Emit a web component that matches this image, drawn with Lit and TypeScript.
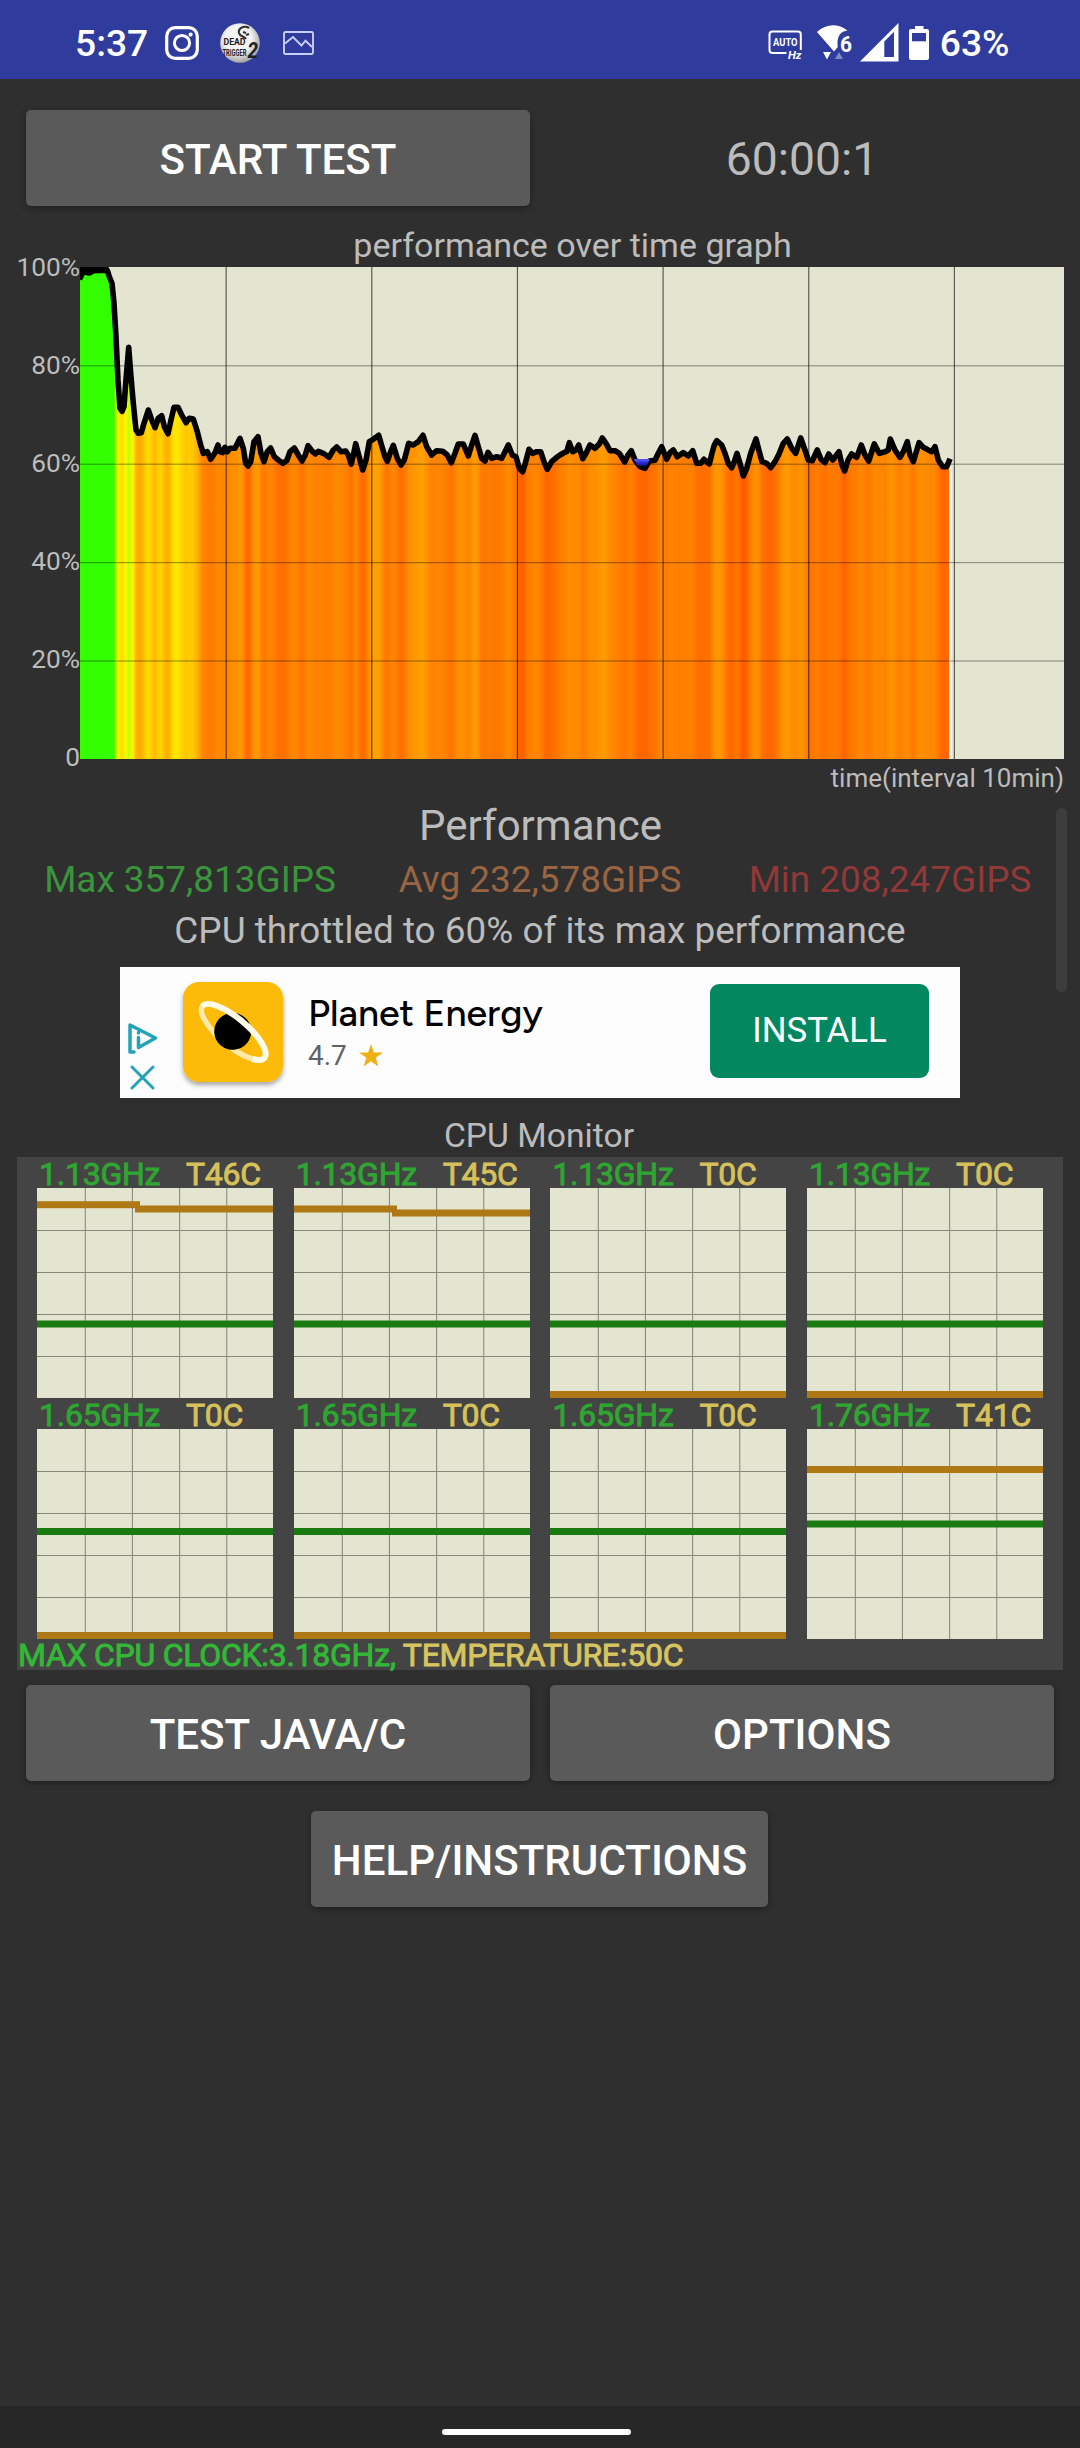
import { LitElement, html, svg, css } from "lit";
import { customElement, property } from "lit/decorators.js";

/* Trace samples, grouped by the stretch of the run they were taken in. */
const early: number[][] = [
  [242,110],[250,95],[268,99],[280,92],[322,91],[328,110],[336,130],[342,190],[348,290],[354,420],[360,505],[366,514],[372,500],[377,430],
  [386,322],[392,400],[400,490],[408,570],[415,580],[424,578],[432,550],[445,510],[455,540],[465,563],[475,535],[485,527],[493,560],
  [504,581],[513,540],[522,502],[534,502],[545,525],[558,548],[568,535],[580,537],[592,575],
];
const middle: number[][] = [
  [62,135],[70,160],[82,155],[92,178],[105,158],[114,135],[120,155],[128,158],[135,142],[142,155],[150,145],[165,145],[180,115],[190,145],[197,190],[204,198],
  [212,185],[222,125],[234,110],[243,160],[252,185],[262,155],[272,144],[283,170],[295,180],[308,190],[320,182],[330,155],[343,144],
  [355,165],[366,183],[376,165],[384,137],[398,155],[406,162],[415,154],[430,160],[447,172],[460,150],[470,141],[483,155],[497,153],[505,165],
  [514,192],[521,160],[527,131],[536,165],[548,210],[558,180],[568,125],[580,118],[596,106],[606,140],[615,170],[622,184],[630,160],
  [640,136],[652,175],[663,195],[673,180],[686,130],[700,135],[715,125],[729,106],[740,140],[755,165],[770,152],[788,154],[802,165],
  [814,188],[825,160],[835,132],[850,132],[865,168],[875,135],[885,106],[895,140],[905,175],[915,183],[924,157],[935,175],[950,170],
  [965,175],[975,155],[985,135],[997,165],[1008,170],[1018,205],[1028,215],[1036,190],[1047,148],[1058,160],[1070,155],[1082,155],
  [1092,185],[1102,208],[1115,185],[1130,172],
];
const late: number[][] = [
  [0,165],[12,158],[20,155],[28,128],[38,155],[48,150],[56,135],[68,176],[78,160],[90,135],[105,145],[118,132],[127,114],[138,130],
  [150,152],[165,152],[178,160],[194,186],[204,165],[214,152],[225,180],[240,200],[255,205],[268,183],[285,181],[295,160],[305,140],
  [320,178],[330,158],[340,150],[352,170],[370,158],[385,168],[398,152],[410,190],[422,190],[432,178],[448,192],[456,160],[463,135],
  [470,122],[485,135],[495,160],[505,190],[515,203],[523,185],[531,160],[540,190],[550,228],[560,205],[572,160],[588,117],[598,155],
  [606,185],[620,190],[632,203],[645,185],[657,162],[670,130],[682,117],[695,145],[707,160],[722,114],[735,150],[745,180],[757,182],
  [772,150],[783,178],[795,188],[806,162],[818,180],[837,155],[846,195],[854,213],[864,180],[875,162],[890,172],[904,135],[915,165],
  [926,183],[943,132],[958,160],[975,155],[985,150],[991,117],[1005,150],[1020,172],[1030,155],[1042,125],[1050,165],[1060,185],
  [1077,128],[1090,142],[1105,150],[1115,155],[1125,140],[1135,180],[1148,200],[1160,200],[1167,184],
];
const place = (points: number[][], left: number, top: number) =>
  points.map(([x, y]) => [x / 3 + left - 80, y / 3 + top - 267]);
const trace = [...place(early, 0, 240), ...place(middle, 180, 400), ...place(late, 560, 400)];
const lineEnd = trace[trace.length - 1][0];

/* The fill colour follows a lightly smoothed trace once the first drop is over. */
const smooth = trace.map(([x, y], i) => {
  if (i < 34 || i > trace.length - 2) return [x, y];
  return [x, (trace[i - 1][1] + 3 * y + trace[i + 1][1]) / 5];
});
const heat = (y: number) => {
  const v = 100 - y / 4.92;
  if (v >= 87) return "rgb(51,255,0)";
  if (v >= 74) return `rgb(${Math.round(255 - (v - 74) * 6)},255,0)`;
  return `rgb(255,${Math.round(89 + (v - 58.4) * 10.7)},0)`;
};

@customElement("throttle-graph")
class ThrottleGraph extends LitElement {
  static styles = css`
    :host { display: grid; grid-template-columns: 80px 984px; color: #bcbcbc; }
    .axis { display: flex; flex-direction: column; justify-content: space-between; height: 490px; font-size: 26.3px; text-align: right; }
    .tick { height: 0; line-height: 0; }
    .plot { display: block; }
    .note { grid-column: 2; height: 38px; line-height: 38px; font-size: 26px; text-align: right; }
  `;
  render() {
    const line = trace.map((p) => p.map((n) => n.toFixed(1)).join(",")).join(" ");
    return html`
      <div class="axis">${["100%", "80%", "60%", "40%", "20%", "0"].map((t) => html`<div class="tick">${t}</div>`)}</div>
      <svg class="plot" width="984" height="492" viewBox="0 0 984 492">
        <defs>
          <linearGradient id="heat" gradientUnits="userSpaceOnUse" x1="0" y1="0" x2=${lineEnd} y2="0">
            ${smooth.map(([x, y]) => svg`<stop offset=${(x / lineEnd).toFixed(4)} stop-color=${heat(y)} />`)}
          </linearGradient>
        </defs>
        <rect width="984" height="492" fill="#e4e5d0" />
        <rect x="870" y="200" width="2" height="292" fill="#f4f1e6" />
        <polygon points="0,492 0,14 ${line} ${lineEnd},492" fill="url(#heat)" />
        <polyline points=${line} fill="none" stroke="#000" stroke-width="5.6" stroke-linejoin="round" stroke-linecap="square" />
        <rect x="0" y="0" width="28.5" height="5" fill="#000" />
        <polygon points="554,192 569.5,192 567,198.5 557.5,198.5" fill="#2a2ad8" />
        <polygon points="554,192 569.5,192 568.7,194.5 555,194.5" fill="#5050f0" />
        ${[1, 2, 3, 4].map((i) => svg`<rect x="0" y=${i * 98.4 - 0.2} width="984" height="1.2" fill="#000" fill-opacity=".36" />`)}
        ${[1, 2, 3, 4, 5, 6].map((i) => svg`<rect x=${i * 145.65 - 0.1} y="0" width="1.2" height="492" fill="#000" fill-opacity=".6" />`)}
      </svg>
      <div class="note">time(interval 10min)</div>
    `;
  }
}

@customElement("core-chart")
class CoreChart extends LitElement {
  @property() clock = "";
  @property() temp = "";
  /* Vertical centres of the two traces; heat may step down part-way across. */
  @property({ type: Number }) clockY = 0;
  @property({ type: Array }) heatY: number[] = [];

  static styles = css`
    :host { display: block; width: 236px; }
    .head { display: grid; grid-template-columns: 147px 1fr; height: 31px; line-height: 34px; padding-left: 2px; box-sizing: border-box; font-size: 32px; letter-spacing: -0.25px; white-space: nowrap; }
    .clock { color: #2fa632; -webkit-text-stroke: 0.9px #2fa632; }
    .temp { color: #d6c15b; -webkit-text-stroke: 0.9px #d6c15b; }
    .plot { display: block; }
  `;
  render() {
    const [a, b] = this.heatY;
    return html`
      <div class="head"><span class="clock">${this.clock}</span><span class="temp">${this.temp}</span></div>
      <svg class="plot" width="236" height="210" viewBox="0 0 236 210">
        <rect width="236" height="210" fill="#e4e5d0" />
        ${[1, 2, 3, 4].map((i) => svg`
          <rect x="0" y=${i * 42} width="236" height="1" fill="#85877b" />
          <rect x=${(i * 47.15 + 0.6).toFixed(2)} y="0" width="1.1" height="210" fill="#8b8d81" />`)}
        <rect x="0" y=${this.clockY - 3.5} width="236" height="7" fill="#187a10" />
        ${b === undefined
          ? svg`<rect x="0" y=${a - 3.5} width="236" height="7" fill="#ae7914" />`
          : svg`<rect x="0" y=${a - 3.5} width="103" height="7" fill="#ae7914" /><rect x="98" y=${b - 3.5} width="138" height="7" fill="#ae7914" />`}
      </svg>
    `;
  }
}

@customElement("app-root")
class AppRoot extends LitElement {
  static styles = css`
    :host { display: flex; flex-direction: column; width: 1080px; height: 2448px; background: #2f2f2f; color: #bcbcbc; font-family: Roboto, "Liberation Sans", sans-serif; overflow: hidden; }
    svg { display: block; flex: none; overflow: visible; }
    .status { display: flex; align-items: center; height: 79px; padding: 6px 70.5px 0 75px; background: #2f3c9d; color: #fff; font-size: 37.2px; font-weight: 500; box-sizing: border-box; flex: none; }
    .status span { padding-top: 1.5px; }
    .status .push { margin-left: auto; }
    .time { width: 90px; }
    .ball { margin-left: 21px; }
    .photo { margin-left: 22.5px; }
    .wifi { margin-left: 14px; }
    .signal { margin-left: 7px; }
    .battery { margin-left: 10px; }
    .charge { margin-left: 11px; }
    .top { display: grid; grid-template-columns: 504px 504px; column-gap: 20px; padding: 31px 26px 0; height: 113px; flex: none; }
    .btn { display: flex; align-items: center; justify-content: center; height: 96px; padding-top: 2px; box-sizing: border-box; border-radius: 5px; background: #5a5a5b; color: #fff; font-size: 42.1px; font-weight: 500; box-shadow: 0 2px 6px rgba(0,0,0,.35); }
    .timer { text-align: center; line-height: 99px; font-size: 46.3px; }
    .title { height: 44px; line-height: 44px; font-size: 34px; text-align: center; padding-left: 65px; }
    .results { position: relative; }
    .thumb { position: absolute; right: 13px; top: 11px; width: 11px; height: 184px; border-radius: 6px; background: #3d3d3e; }
    .heading { height: 57px; line-height: 57px; font-size: 42px; text-align: center; padding-left: 1px; }
    .stats { display: grid; grid-template-columns: repeat(3, 350px); justify-content: center; height: 51px; line-height: 51px; font-size: 36.9px; text-align: center; }
    .max { color: #3a943c; } .avg { color: #996441; } .min { color: #913838; }
    .verdict { height: 62px; line-height: 51px; font-size: 36.9px; text-align: center; }
    .ad { display: flex; align-items: center; width: 840px; height: 131px; padding-bottom: 2px; box-sizing: border-box; margin: 0 auto; background: #fdfdfd; }
    .app { border-radius: 16px; box-shadow: 0 3px 5px rgba(0,0,0,.35); overflow: hidden; }
    .info { margin-left: 25px; width: 402px; padding-top: 3px; }
    .name { color: #000; font-family: Figtree, "Open Sans", Inter, sans-serif; font-size: 37.6px; line-height: 42px; font-weight: 500; white-space: nowrap; }
    .rating { display: flex; align-items: center; gap: 12px; padding-top: 3px; color: #5f6368; font-size: 28px; line-height: 38px; }
    .install { width: 219px; height: 94px; line-height: 92px; border-radius: 9px; background: #03875f; color: #fff; font-size: 34.8px; text-align: center; margin-bottom: 1px; }
    .cpu { height: 59px; line-height: 75px; font-size: 33.7px; text-align: center; padding-right: 2px; }
    .panel { width: 1046px; height: 513px; margin: 0 auto; background: #444; }
    .cores { display: grid; grid-template-columns: repeat(4, 236px); column-gap: 20.7px; padding-left: 20px; }
    .peak { height: 31px; line-height: 33px; font-size: 32px; letter-spacing: -0.27px; padding-left: 1px; color: #33b737; -webkit-text-stroke: 0.9px #33b737; white-space: pre; }
    .peak b { font-weight: 400; color: #d6c560; -webkit-text-stroke: 0.9px #d6c560; }
    .actions { display: grid; grid-template-columns: 504px 504px; gap: 30px 20px; padding: 15px 26px; }
    .help { grid-column: 1 / 3; justify-self: center; width: 457px; margin-right: 1px; }
    .nav { margin-top: auto; height: 42px; background: #272727; display: flex; justify-content: center; align-items: center; padding: 9px 7px 0 0; box-sizing: border-box; }
    .pill { width: 189px; height: 6px; border-radius: 3px; background: #fff; }
  `;

  leftIcons() {
    return html`
      <svg width="34" height="34" viewBox="0 0 34 34" fill="none" stroke="#fff">
        <rect x="1.7" y="1.7" width="30.6" height="30.6" rx="8.5" stroke-width="3.2" />
        <circle cx="17" cy="17" r="7.6" stroke-width="3" />
        <circle cx="25.6" cy="8.6" r="2.1" fill="#fff" stroke="none" />
      </svg>
      <svg class="ball" width="40" height="40" viewBox="0 0 40 40">
        <defs><radialGradient id="ball" cx=".45" cy=".4" r=".62"><stop offset=".55" stop-color="#f3f3f3" /><stop offset="1" stop-color="#9d9d9d" /></radialGradient></defs>
        <circle cx="20" cy="20" r="19.8" fill="url(#ball)" />
        <path d="M29 5c-5-3-11 0-10 5 1 4 5 3 7 6M23 9l3 1M26 12l3-1" fill="none" stroke="#333" stroke-width="2.2" />
        <g fill="#222" font-family="Roboto" font-weight="700">
          <text x="3.5" y="21.6" font-size="9.5" textLength="22" lengthAdjust="spacingAndGlyphs">DEAD</text>
          <text x="2.5" y="33.2" font-size="9.5" textLength="24" lengthAdjust="spacingAndGlyphs">TRIGGER</text>
          <text x="27.5" y="35" font-size="22" textLength="10.5" lengthAdjust="spacingAndGlyphs" font-style="italic">2</text>
        </g>
      </svg>
      <svg class="photo" width="31" height="24" viewBox="0 0 31 24" fill="none" stroke="#c9cef6" stroke-width="1.9">
        <rect x="1" y="1" width="29" height="22" rx="1.5" />
        <path d="M2 12.5 10 6l8.5 8.5 4-4.8L29 16" />
      </svg>
    `;
  }

  rightIcons() {
    return html`
      <svg class="push" width="35" height="34" viewBox="0 0 35 34">
        <path d="M18.5 27H4.5a3 3 0 0 1-3-3V8.5a3 3 0 0 1 3-3h25.3a3 3 0 0 1 3 3V24" fill="none" stroke="#fff" stroke-width="2" />
        <g fill="#fff" font-family="Roboto" font-weight="700">
          <text x="5" y="20.4" font-size="11.5" textLength="24.5" lengthAdjust="spacingAndGlyphs">AUTO</text>
          <text x="20" y="33.2" font-size="10.5" textLength="13.5" lengthAdjust="spacingAndGlyphs" font-style="italic">Hz</text>
        </g>
      </svg>
      <svg class="wifi" width="36" height="36" viewBox="0 0 36 36">
        <path d="M0 7C9-1.5 21-2 30.5 5.5C24 6 20.5 11 20.5 18c0 2 .3 4 .3 4L17 26.5Z" fill="#fff" />
        <text x="23" y="26.5" font-family="Roboto" font-weight="700" font-size="22.5" fill="#fff" textLength="12" lengthAdjust="spacingAndGlyphs">6</text>
        <path d="M6 27h8l-4 7.5z" fill="#fff" />
        <path d="M18 34h8l-4-7z" fill="#7f88c8" />
      </svg>
      <svg class="signal" width="39" height="39" viewBox="0 0 39 39">
        <path d="M0 38.5 38.5 0V38.5Z" fill="#fff" />
        <path d="M24.3 18.5 34 8.8V34H24.3Z" fill="#2f3c9d" />
      </svg>
      <svg class="battery" width="20" height="34" viewBox="0 0 20 34">
        <path d="M6 0h8.5v3H18a2 2 0 0 1 2 2v27a2 2 0 0 1-2 2H2a2 2 0 0 1-2-2V5a2 2 0 0 1 2-2h4z" fill="#fff" />
        <rect x="3" y="7" width="14" height="8.3" fill="#2f3c9d" />
      </svg>
      <span class="charge">63%</span>
    `;
  }

  render() {
    const cores = [
      { clock: "1.13GHz", temp: "T46C", y: 136, heat: [16.7, 21] },
      { clock: "1.13GHz", temp: "T45C", y: 136, heat: [21, 25] },
      { clock: "1.13GHz", temp: "T0C", y: 136, heat: [206.5] },
      { clock: "1.13GHz", temp: "T0C", y: 136, heat: [206.5] },
      { clock: "1.65GHz", temp: "T0C", y: 102.5, heat: [206.5] },
      { clock: "1.65GHz", temp: "T0C", y: 102.5, heat: [206.5] },
      { clock: "1.65GHz", temp: "T0C", y: 102.5, heat: [206.5] },
      { clock: "1.76GHz", temp: "T41C", y: 95, heat: [40.5] },
    ];
    return html`
      <div class="status"><span class="time">5:37</span>${this.leftIcons()}${this.rightIcons()}</div>
      <div class="top"><div class="btn">START TEST</div><div class="timer">60:00:1</div></div>
      <div class="title">performance over time graph</div>
      <throttle-graph></throttle-graph>
      <div class="results">
        <div class="heading">Performance</div>
        <div class="stats"><span class="max">Max 357,813GIPS</span><span class="avg">Avg 232,578GIPS</span><span class="min">Min 208,247GIPS</span></div>
        <div class="verdict">CPU throttled to 60% of its max performance</div>
        <div class="ad">
          <svg width="63" height="128" viewBox="0 0 63 128" fill="none" stroke="#22a3b8" stroke-linecap="round" stroke-linejoin="round">
            <path d="M14 84 10 84V57L35.5 70 18.5 79.5" stroke-width="3.5" />
            <path d="M18.5 69.5V78.5M18.5 64.5V65" stroke-width="3.5" />
            <path d="M12 99 33 120M33 99 12 120" stroke-width="3" />
          </svg>
          <svg class="app" width="100" height="100" viewBox="0 0 100 100">
            <rect width="100" height="100" fill="#fcbb08" />
            <g transform="translate(50.5 50) rotate(40)">
              <ellipse rx="40.3" ry="13.8" fill="none" stroke="#fde9a8" stroke-width="5.5" />
              <circle cx="-1" r="18.5" fill="#000" />
              <path d="M-40.3 0A40.3 13.8 0 0 1 40.3 0A40.3 13.8 0 0 1 32 8.4" fill="none" stroke="#fffbe6" stroke-width="6" />
            </g>
          </svg>
          <div class="info">
            <div class="name">Planet Energy</div>
            <div class="rating">4.7<svg width="24" height="23" viewBox="0 0 24 23"><path d="M12 0 14.9 8.5H24L16.7 13.8 19.4 22.5 12 17.3 4.6 22.5 7.3 13.8 0 8.5H9.1Z" fill="#efb112" /></svg></div>
          </div>
          <div class="install">INSTALL</div>
        </div>
        <div class="thumb"></div>
      </div>
      <div class="cpu">CPU Monitor</div>
      <div class="panel">
        <div class="cores">
          ${cores.map((c) => html`<core-chart .clock=${c.clock} .temp=${c.temp} .clockY=${c.y} .heatY=${c.heat}></core-chart>`)}
        </div>
        <div class="peak">MAX CPU CLOCK:3.18GHz, <b>TEMPERATURE:50C</b></div>
      </div>
      <div class="actions">
        <div class="btn">TEST JAVA/C</div>
        <div class="btn">OPTIONS</div>
        <div class="btn help">HELP/INSTRUCTIONS</div>
      </div>
      <div class="nav"><div class="pill"></div></div>
    `;
  }
}
